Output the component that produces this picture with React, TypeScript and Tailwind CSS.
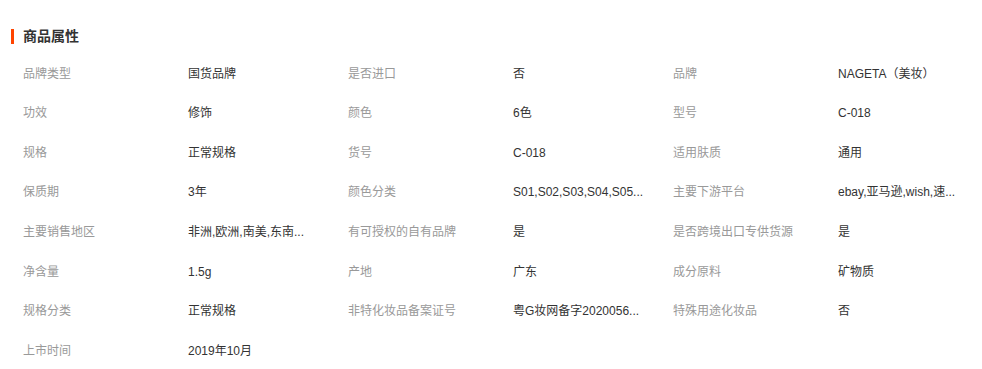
import React from "react";

const rows: [string, string][][] = [
  [["品牌类型", "国货品牌"], ["是否进口", "否"], ["品牌", "NAGETA（美妆）"]],
  [["功效", "修饰"], ["颜色", "6色"], ["型号", "C-018"]],
  [["规格", "正常规格"], ["货号", "C-018"], ["适用肤质", "通用"]],
  [["保质期", "3年"], ["颜色分类", "S01,S02,S03,S04,S05..."], ["主要下游平台", "ebay,亚马逊,wish,速..."]],
  [["主要销售地区", "非洲,欧洲,南美,东南..."], ["有可授权的自有品牌", "是"], ["是否跨境出口专供货源", "是"]],
  [["净含量", "1.5g"], ["产地", "广东"], ["成分原料", "矿物质"]],
  [["规格分类", "正常规格"], ["非特化妆品备案证号", "粤G妆网备字2020056..."], ["特殊用途化妆品", "否"]],
  [["上市时间", "2019年10月"]],
];

export default function App() {
  return (
    <div
      className="w-[982px] h-[369px] bg-white overflow-hidden"
      style={{ fontFamily: '"Liberation Sans", "Noto Sans CJK SC", sans-serif' }}
    >
      <div className="flex items-center pt-[26px] pl-[11px]">
        <div className="w-[3px] h-[15px] bg-[#ff4400]" />
        <div className="ml-[9px] text-[14px] leading-[20px] font-bold text-[#333]">商品属性</div>
      </div>
      <div className="pl-[23px] pt-[8px]">
        {rows.map((row, i) => (
          <div key={i} className="flex h-[39.57px] items-center text-[12px]">
            {row.map(([k, v], j) => (
              <div key={j} className="flex w-[325px] shrink-0">
                <div className="w-[165px] text-[#999] whitespace-nowrap">{k}</div>
                <div className="w-[160px] text-[#333] whitespace-nowrap">{v}</div>
              </div>
            ))}
          </div>
        ))}
      </div>
    </div>
  );
}
